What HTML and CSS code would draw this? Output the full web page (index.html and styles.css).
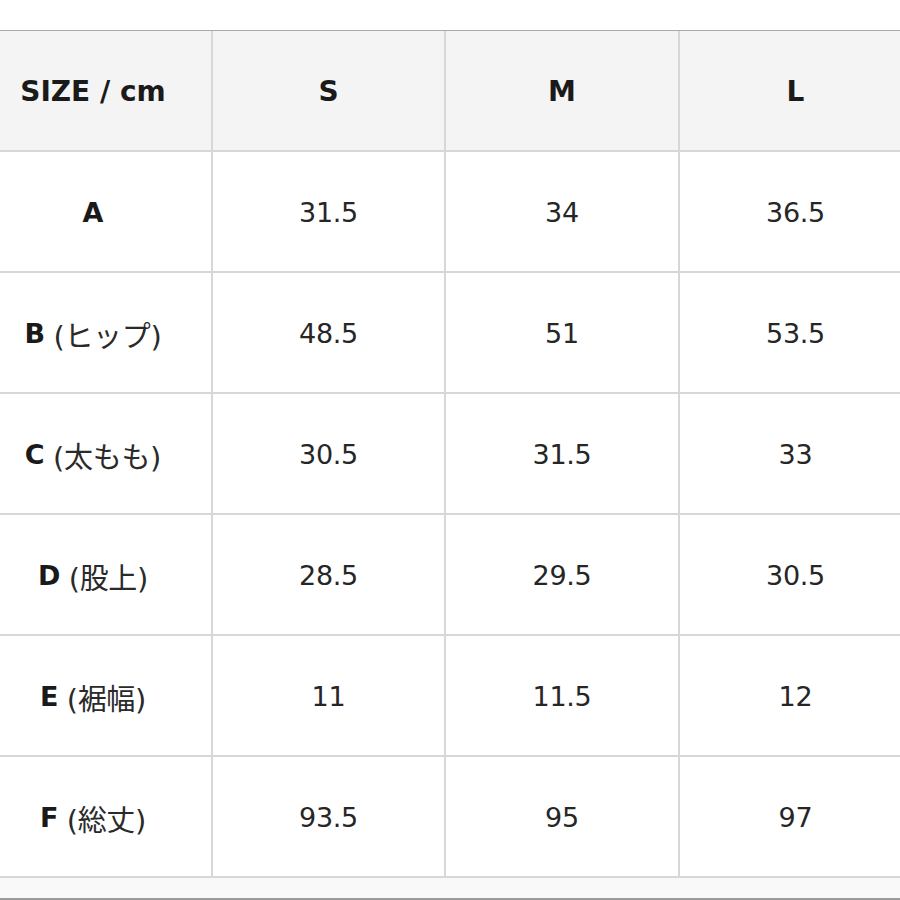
FILE: index.html
```html
<!DOCTYPE html>
<html lang="ja">
<head>
<meta charset="utf-8">
<title>Size chart</title>
<link rel="stylesheet" href="styles.css">
</head>
<body>
<div class="sheet">
  <div class="grid">
    <div class="cell head"><b>SIZE / cm</b></div>
    <div class="cell head"><b>S</b></div>
    <div class="cell head"><b>M</b></div>
    <div class="cell head"><b>L</b></div>

    <div class="cell label"><b>A</b></div>
    <div class="cell">31.5</div>
    <div class="cell">34</div>
    <div class="cell">36.5</div>

    <div class="cell label"><b>B</b>&nbsp;<span class="jp">(ヒップ)</span></div>
    <div class="cell">48.5</div>
    <div class="cell">51</div>
    <div class="cell">53.5</div>

    <div class="cell label"><b>C</b>&nbsp;<span class="jp">(太もも)</span></div>
    <div class="cell">30.5</div>
    <div class="cell">31.5</div>
    <div class="cell">33</div>

    <div class="cell label"><b>D</b>&nbsp;<span class="jp">(股上)</span></div>
    <div class="cell">28.5</div>
    <div class="cell">29.5</div>
    <div class="cell">30.5</div>

    <div class="cell label"><b>E</b>&nbsp;<span class="jp">(裾幅)</span></div>
    <div class="cell">11</div>
    <div class="cell">11.5</div>
    <div class="cell">12</div>

    <div class="cell label"><b>F</b>&nbsp;<span class="jp">(総丈)</span></div>
    <div class="cell">93.5</div>
    <div class="cell">95</div>
    <div class="cell">97</div>
  </div>
  <div class="foot"></div>
</div>
</body>
</html>
```

FILE: styles.css
```css
html, body {
  margin: 0;
  padding: 0;
  background: #ffffff;
}

body {
  font-family: "DejaVu Sans", "Noto Sans CJK JP", sans-serif;
  color: #262626;
  overflow: hidden;
}

.sheet {
  margin-top: 30px;
  margin-left: -25px;
  width: 938px;
  border-top: 1px solid #a9a9a9;
}

.grid {
  display: grid;
  grid-template-columns: 238px 233px 234px 233px;
  grid-auto-rows: 121px;
}

.cell {
  box-sizing: border-box;
  display: flex;
  align-items: center;
  justify-content: center;
  padding-top: 2px;
  border-right: 2px solid #d7d7d7;
  border-bottom: 2px solid #d7d7d7;
  font-size: 27px;
  font-weight: 400;
  letter-spacing: -0.3px;
  white-space: nowrap;
}

.head {
  background: #f4f4f4;
}

.cell b {
  font-weight: 700;
  color: #1a1a1a;
  letter-spacing: 0;
}

.head b {
  font-size: 28px;
}

.jp {
  font-family: "DejaVu Sans", "Noto Sans CJK JP", sans-serif;
  font-size: 29px;
  font-weight: 400;
  color: #2a2a2a;
}

.foot {
  height: 20px;
  background: #f9f9f9;
  border-bottom: 2px solid #9a9a9a;
}
```
